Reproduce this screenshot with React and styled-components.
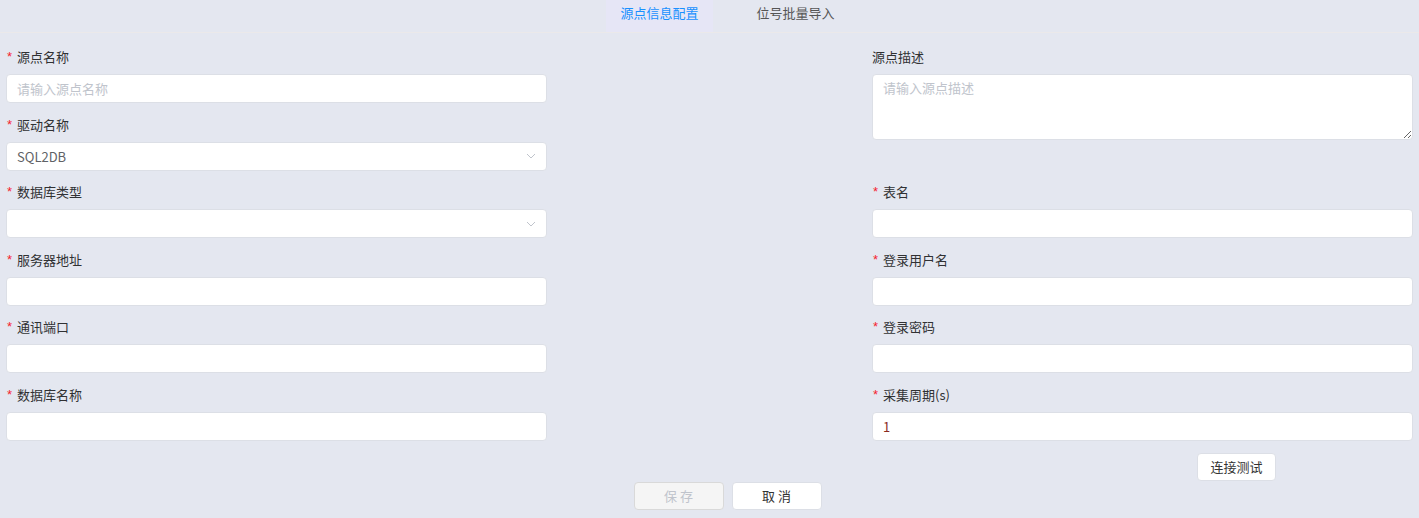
import React from "react";
import styled, { createGlobalStyle } from "styled-components";

const Global = createGlobalStyle`
  html, body { margin: 0; padding: 0; background: #e4e7f0; }
  body { font-family: "Noto Sans CJK SC", "Noto Sans", sans-serif; font-size: 13px; color: #303133; }
  * { box-sizing: border-box; }
`;

const Page = styled.div`
  width: 1419px;
  min-height: 518px;
  background: #e4e7f0;
`;

const TabBar = styled.div`
  height: 33px;
  display: flex;
  justify-content: center;
  gap: 30px;
  padding-left: 36px;
  border-bottom: 1px solid #ebe9ea;
`;

const Tab = styled.div`
  height: 32px;
  padding: 0 14px;
  display: flex;
  align-items: center;
  padding-bottom: 8px;
  font-size: 13px;
  color: ${(p) => (p.$active ? "#1890ff" : "#555")};
  background: ${(p) => (p.$active ? "#e6e6f6" : "transparent")};
  cursor: pointer;
`;

const Form = styled.div`
  display: grid;
  grid-template-columns: 541px 541px;
  column-gap: 325px;
  row-gap: 11.5px;
  padding: 14px 6px 0;
`;

const Field = styled.div`
  display: flex;
  flex-direction: column;
  grid-row: ${(p) => (p.$span ? `span ${p.$span}` : "auto")};
`;

const Label = styled.div`
  height: 20px;
  line-height: 20px;
  margin-bottom: 7px;
  font-size: 13px;
  color: #303133;
  display: flex;
  align-items: center;
`;

const Star = styled.span`
  color: #f5222d;
  width: 11px;
  padding-left: 1px;
  font-family: "Liberation Sans", sans-serif;
  font-size: 13px;
`;

const Input = styled.input`
  width: 100%;
  height: 29px;
  border: 1px solid #dcdfe6;
  border-radius: 4px;
  background: #fff;
  padding: 0 10px;
  font-family: inherit;
  font-size: 13px;
  color: ${(p) => p.$color || "#606266"};
  outline: none;
  &::placeholder { color: #c0c4cc; }
`;

const TextArea = styled.textarea`
  width: 100%;
  height: 66px;
  border: 1px solid #dcdfe6;
  border-radius: 4px;
  background: #fff;
  padding: 3px 10px;
  font-family: inherit;
  font-size: 13px;
  line-height: 20px;
  color: #606266;
  outline: none;
  resize: vertical;
  display: block;
  &::placeholder { color: #c0c4cc; }
`;

const SelectBox = styled.div`
  height: 29px;
  border: 1px solid #dcdfe6;
  border-radius: 4px;
  background: #fff;
  padding: 0 10px;
  display: flex;
  align-items: center;
  justify-content: space-between;
  color: #606266;
  font-size: 13px;
`;

const TestRow = styled.div`
  display: flex;
  justify-content: flex-end;
  padding-right: 143px;
  margin-top: 12px;
`;

const Footer = styled.div`
  display: flex;
  justify-content: center;
  gap: 8px;
  padding-left: 36px;
  margin-top: 1px;
`;

const Button = styled.button`
  height: 28px;
  width: ${(p) => p.$w}px;
  border: 1px solid ${(p) => (p.disabled ? "#d9d9d9" : "#dcdfe6")};
  border-radius: 4px;
  background: ${(p) => (p.disabled ? "#f5f5f5" : "#fff")};
  color: ${(p) => (p.disabled ? "#c0c4cc" : "#333")};
  font-family: inherit;
  font-size: 13px;
  padding: 0;
  cursor: ${(p) => (p.disabled ? "not-allowed" : "pointer")};
`;

const Chevron = () => (
  <svg width="10" height="6" viewBox="0 0 10 6" fill="none">
    <path d="M1 1l4 4 4-4" stroke="#c0c4cc" strokeWidth="1" />
  </svg>
);

const LabelText = ({ req, children }) => (
  <Label>
    {req && <Star>*</Star>}
    <span>{children}</span>
  </Label>
);

export default function App() {
  return (
    <Page>
      <Global />
      <TabBar>
        <Tab $active>源点信息配置</Tab>
        <Tab>位号批量导入</Tab>
      </TabBar>
      <Form>
        <Field>
          <LabelText req>源点名称</LabelText>
          <Input placeholder="请输入源点名称" />
        </Field>
        <Field $span={2}>
          <LabelText>源点描述</LabelText>
          <TextArea placeholder="请输入源点描述" />
        </Field>
        <Field>
          <LabelText req>驱动名称</LabelText>
          <SelectBox>
            <span>SQL2DB</span>
            <Chevron />
          </SelectBox>
        </Field>
        <Field>
          <LabelText req>数据库类型</LabelText>
          <SelectBox>
            <span />
            <Chevron />
          </SelectBox>
        </Field>
        <Field>
          <LabelText req>表名</LabelText>
          <Input />
        </Field>
        <Field>
          <LabelText req>服务器地址</LabelText>
          <Input />
        </Field>
        <Field>
          <LabelText req>登录用户名</LabelText>
          <Input />
        </Field>
        <Field>
          <LabelText req>通讯端口</LabelText>
          <Input />
        </Field>
        <Field>
          <LabelText req>登录密码</LabelText>
          <Input />
        </Field>
        <Field>
          <LabelText req>数据库名称</LabelText>
          <Input />
        </Field>
        <Field>
          <LabelText req>采集周期(s)</LabelText>
          <Input defaultValue="1" $color="#8a2a1f" />
        </Field>
      </Form>
      <TestRow>
        <Button $w={79}>连接测试</Button>
      </TestRow>
      <Footer>
        <Button $w={90} disabled>保 存</Button>
        <Button $w={90}>取 消</Button>
      </Footer>
    </Page>
  );
}
